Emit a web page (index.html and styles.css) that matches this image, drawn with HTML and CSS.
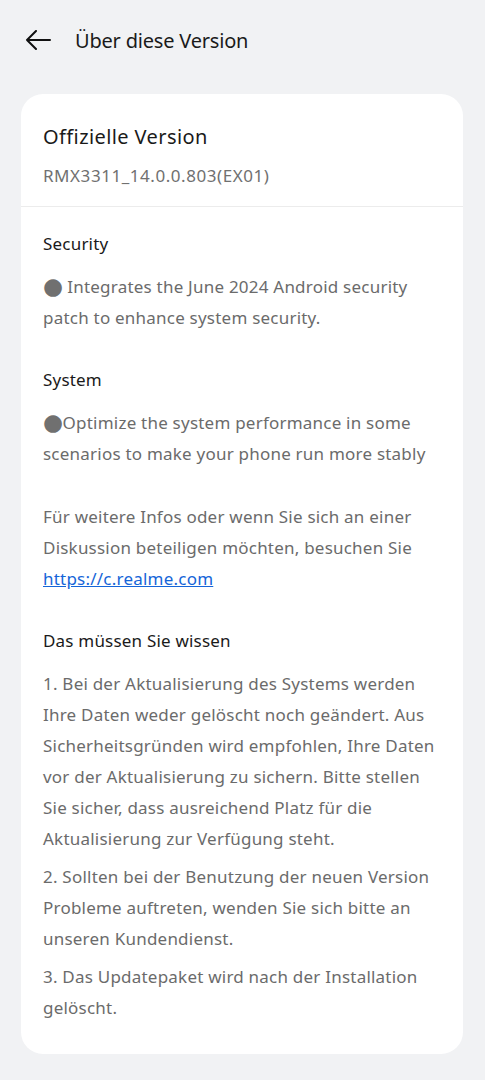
FILE: index.html
```html
<!DOCTYPE html>
<html lang="de">
	<head>
		<meta charset="utf-8">
		<meta name="viewport" content="width=device-width, initial-scale=1">
		<title>Über diese Version</title>
		<link rel="stylesheet" href="styles.css">
	</head>
	<body>
		<header class="topbar">
			<button class="back" title="Zurück">
				<svg width="26" height="20" viewBox="0 0 26 20" aria-hidden="true"><path d="M25 10H2M11 1L2 10l9 9" fill="none" stroke="currentColor" stroke-width="2" stroke-linecap="round" stroke-linejoin="round"/></svg>
			</button>
			<h1>Über diese Version</h1>
		</header>

		<main class="card">
			<div class="card-head">
				<h2>Offizielle Version</h2>
				<p class="build">RMX3311_14.0.0.803(EX01)</p>
			</div>

			<div class="card-body">
				<section>
					<h3>Security</h3>
					<p><span class="dot">●</span> Integrates the June 2024 Android security patch to enhance system security.</p>
				</section>

				<section>
					<h3>System</h3>
					<p><span class="dot">●</span>Optimize the system performance in some scenarios to make your phone run more stably</p>
				</section>

				<section>
					<p>Für weitere Infos oder wenn Sie sich an einer Diskussion beteiligen möchten, besuchen Sie <a href="#">https://c.realme.com</a></p>
				</section>

				<section>
					<h3>Das müssen Sie wissen</h3>
					<ol class="notes">
						<li>1. Bei der Aktualisierung des Systems werden Ihre Daten weder gelöscht noch geändert. Aus Sicherheitsgründen wird empfohlen, Ihre Daten vor der Aktualisierung zu sichern. Bitte stellen Sie sicher, dass ausreichend Platz für die Aktualisierung zur Verfügung steht.</li>
						<li>2. Sollten bei der Benutzung der neuen Version Probleme auftreten, wenden Sie sich bitte an unseren Kundendienst.</li>
						<li>3. Das Updatepaket wird nach der Installation gelöscht.</li>
					</ol>
				</section>
			</div>
		</main>
	</body>
</html>
```

FILE: styles.css
```css
html
{
	font-family: "Noto Sans", "Liberation Sans", sans-serif;
	-webkit-font-smoothing: antialiased;
}

body
{
	margin: 0;
	background: #f1f2f4;
	color: #1a1a1a;
}

.topbar
{
	height: 80px;
	display: flex;
	align-items: center;
	padding: 0 0 0 25px;
	gap: 24px;
}

.back
{
	border: none;
	background: transparent;
	padding: 0;
	color: #111;
	display: flex;
	cursor: pointer;
}

h1
{
	margin: 0;
	font-size: 20px;
	font-weight: normal;
	letter-spacing: -0.01em;
}

.card
{
	display: block;
	margin: 14px 22px 25px 21px;
	background: #fff;
	border-radius: 22px;
	padding-bottom: 31px;
}

.card-head
{
	padding: 28px 22px 15px;
	border-bottom: 1px solid #ececec;
}

h2
{
	margin: 0;
	font-size: 20px;
	line-height: 30px;
	font-weight: normal;
	letter-spacing: 0.4px;
}

.build
{
	margin: 8px 0 0;
	font-size: 17px;
	line-height: 31px;
	color: #707070;
	letter-spacing: 0.55px;
}

.card-body
{
	padding: 22px 22px 0;
}

section + section
{
	margin-top: 32px;
}

h3
{
	margin: 0 0 12px;
	font-size: 17px;
	line-height: 30px;
	font-weight: normal;
	letter-spacing: 0.2px;
}

p
{
	margin: 0;
	font-size: 17px;
	line-height: 31px;
	color: #6b6b6b;
	letter-spacing: 0.22px;
}

.dot
{
	font-family: "DejaVu Sans", sans-serif;
	font-size: 23px;
	line-height: 20px;
	vertical-align: -1px;
	color: #707070;
	letter-spacing: -0.5px;
}

a
{
	color: #1565d8;
	text-decoration: underline;
}

.notes
{
	list-style: none;
	margin: 0;
	padding: 0;
	display: grid;
	gap: 7px;
	font-size: 17px;
	line-height: 31px;
	color: #6b6b6b;
	letter-spacing: 0.22px;
}
```
